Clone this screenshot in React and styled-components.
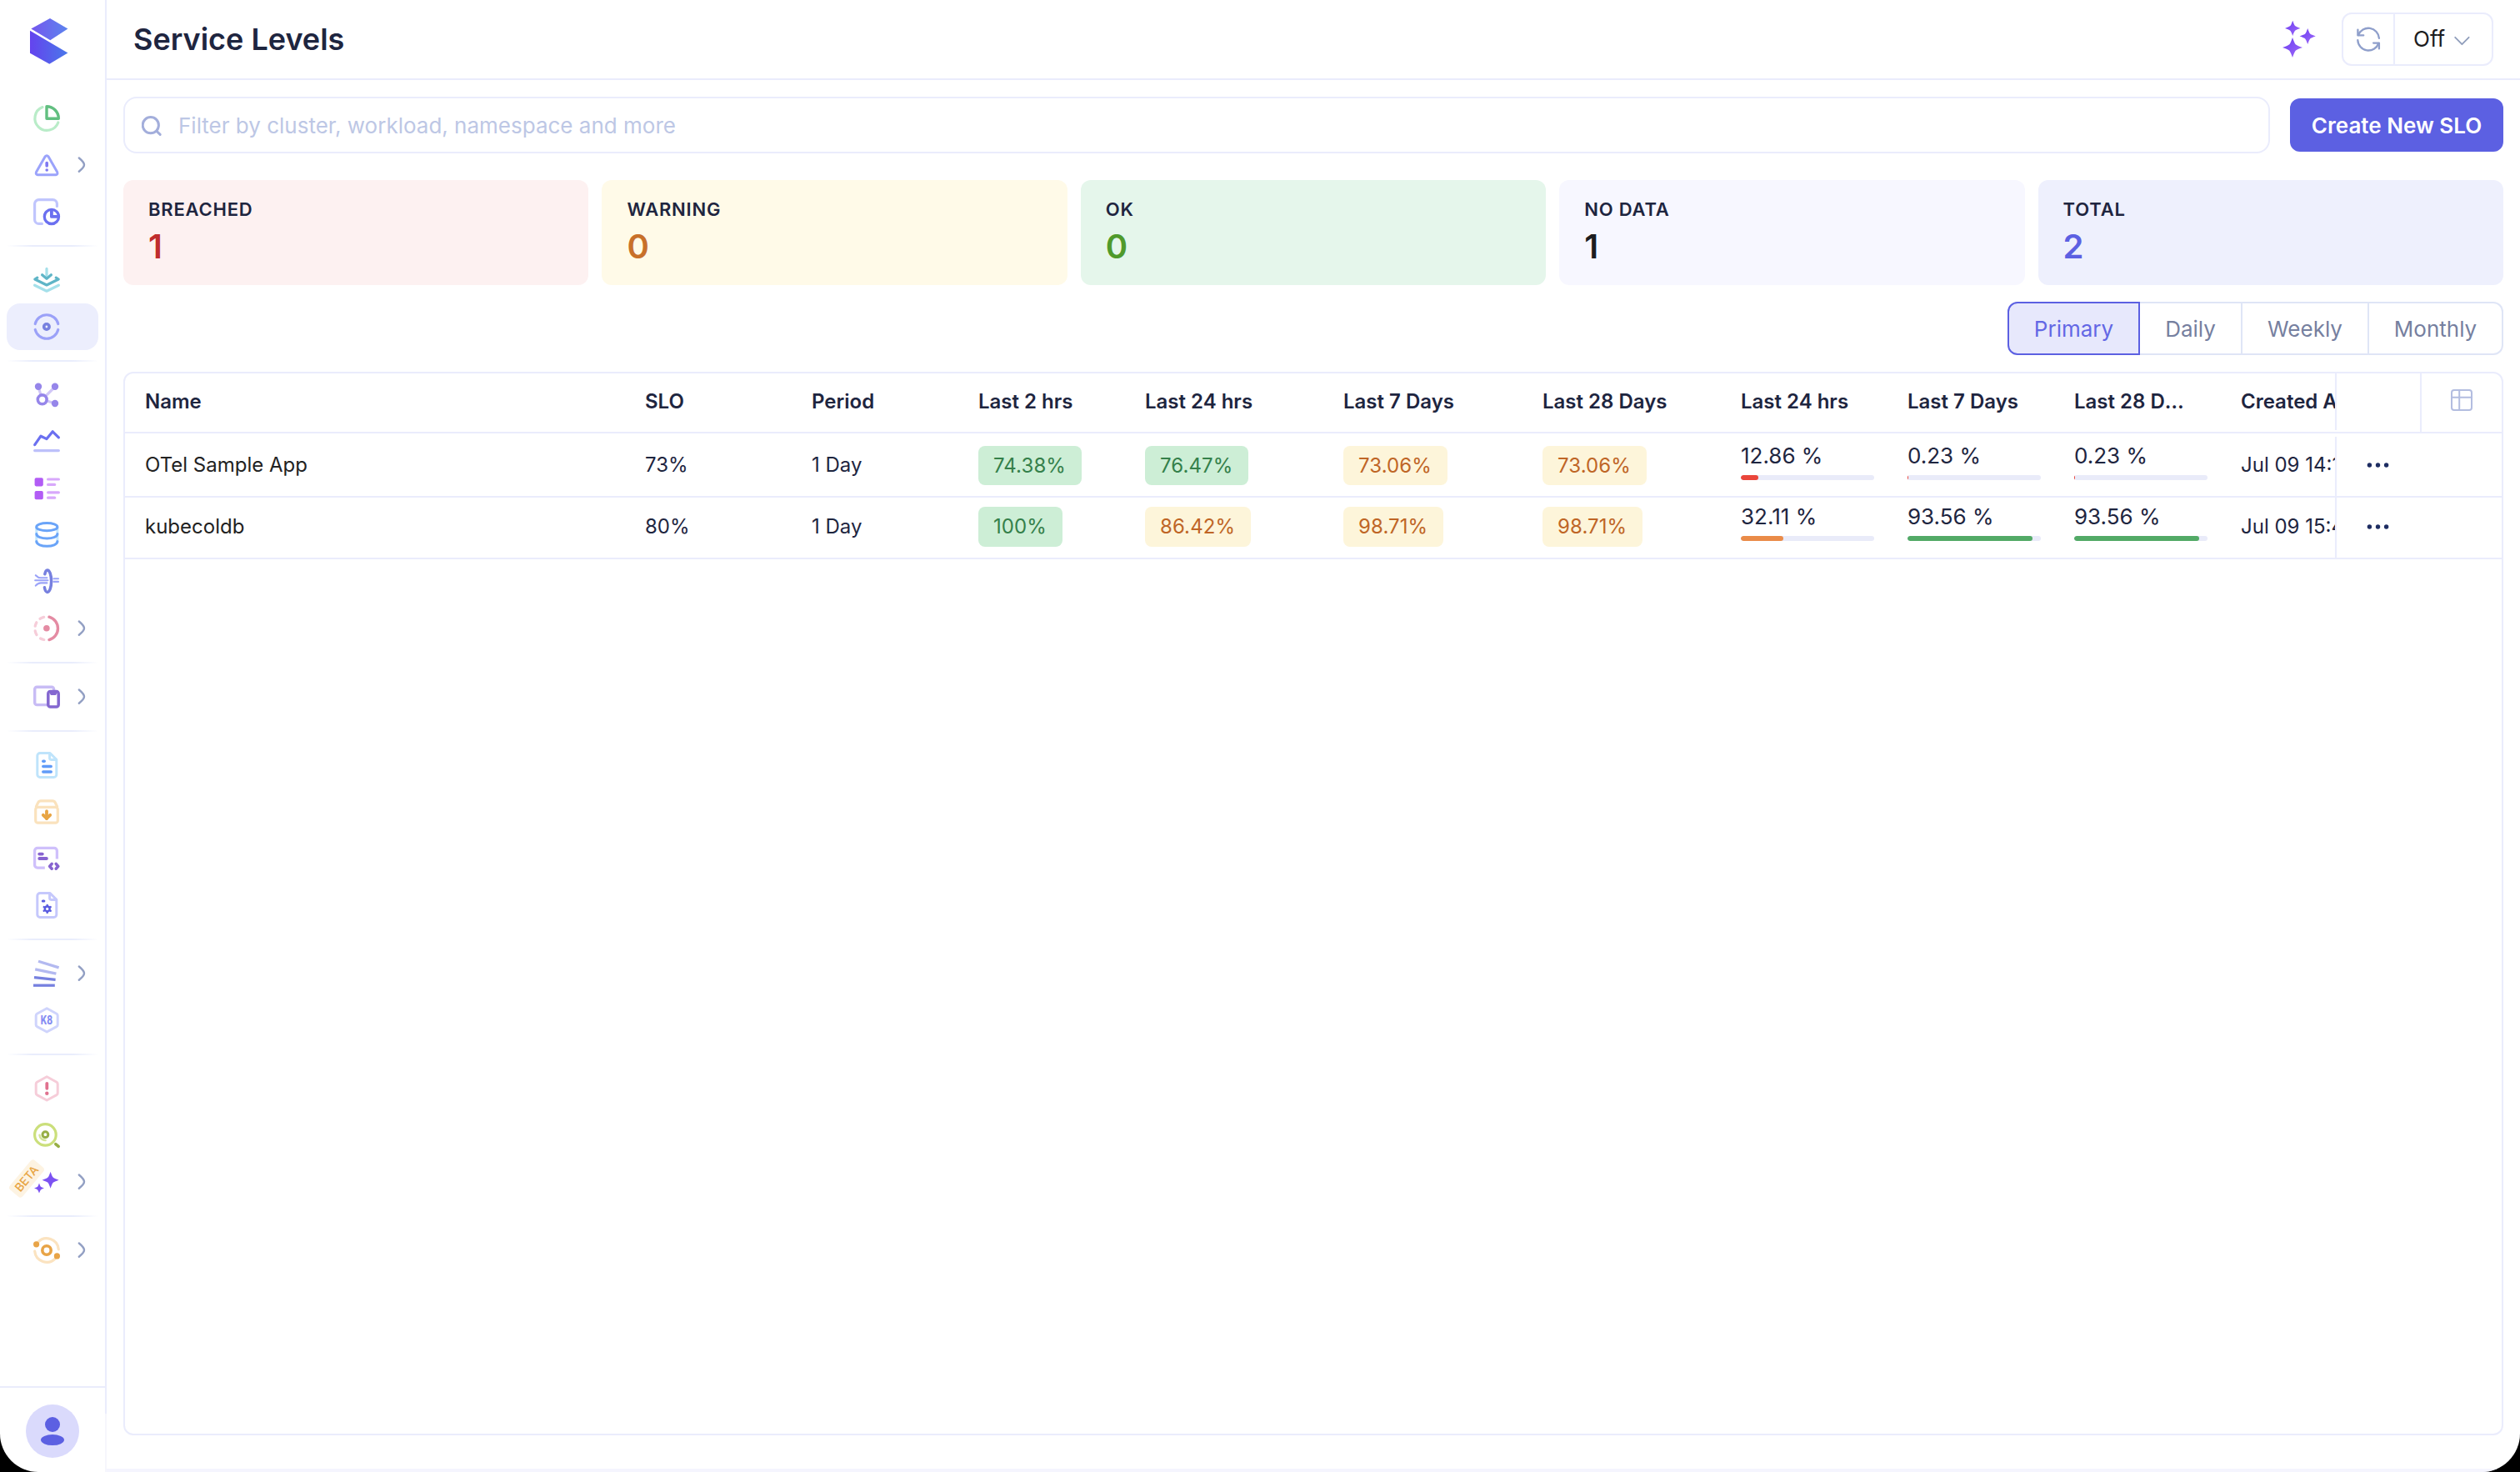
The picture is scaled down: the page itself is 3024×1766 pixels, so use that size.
import React from 'react';
import styled, { createGlobalStyle, css } from 'styled-components';

const Global = createGlobalStyle`
  *, *::before, *::after { box-sizing: border-box; }
  html, body, #root { height: 100%; }
  body {
    margin: 0;
    background: #000;
    overflow: hidden;
    font-family: Inter, "Liberation Sans", sans-serif;
    color: #1e253f;
  }
`;

const line = '#eaecfc';

/* ---------- shell ---------- */
const Window = styled.div`
  display: flex;
  width: 100%;
  height: 1766px;
  background: #fff;
  border-radius: 0 0 46px 46px;
  overflow: hidden;
`;
const Sidebar = styled.aside`
  display: flex;
  flex-direction: column;
  width: 128px;
  flex: none;
`;
const SidebarTop = styled.div`
  flex: 1;
  display: flex;
  flex-direction: column;
  border-right: 2px solid ${line};
`;
const LogoBox = styled.div`
  height: 114px;
  padding: 22px 0 0 36px;
  svg { display: block; }
`;
const NavItem = styled.a`
  position: relative;
  display: flex;
  align-items: center;
  height: 56px;
  margin: 0 8px;
  padding-left: 32px;
  border-radius: 16px;
  background: ${(p) => (p.$active ? '#eceefd' : 'transparent')};
  svg { display: block; flex: none; overflow: visible; }
`;
const ChevronSlot = styled.span`
  margin-left: 20px;
`;
const NavDivider = styled.hr`
  width: 110px;
  height: 2px;
  margin: 12px 8px;
  border: 0;
  background: linear-gradient(90deg, rgba(234, 238, 252, 0), #e9edfc 28%, #e9edfc 72%, rgba(234, 238, 252, 0));
`;
const BetaTag = styled.span`
  position: absolute;
  left: 1px;
  top: 14px;
  width: 46px;
  height: 20px;
  border-radius: 4px;
  background: #fdf3e2;
  color: #e8a544;
  font-size: 14px;
  font-weight: 500;
  line-height: 20px;
  text-align: center;
  transform: rotate(-50deg);
`;
const Profile = styled.div`
  height: 103px;
  border-top: 2px solid ${line};
  border-right: 2px solid;
  border-image: linear-gradient(${line}, ${line} 31%, #f6f6fc 32%, #f6f6fc) 2;
  border-bottom: 0;
  border-left: 0;
  padding: 20px 0 0 31px;
`;
const Avatar = styled.div`
  width: 64px;
  height: 64px;
  border-radius: 50%;
  background: #dadafc;
  svg { display: block; }
`;

/* ---------- main ---------- */
const Main = styled.main`
  flex: 1;
  min-width: 0;
  display: flex;
  flex-direction: column;
  border-bottom: 4px solid #f5f5fe;
`;
const Header = styled.header`
  display: flex;
  align-items: center;
  height: 96px;
  padding: 0 32px;
  border-bottom: 2px solid ${line};
`;
const Title = styled.h1`
  margin: 0;
  font-size: 36px;
  font-weight: 600;
  line-height: 44px;
`;
const HeaderTools = styled.div`
  display: flex;
  align-items: center;
  gap: 31px;
  margin-left: auto;
  svg { display: block; }
`;
const RefreshGroup = styled.div`
  display: flex;
  width: 182px;
  height: 64px;
  border: 2px solid ${line};
  border-radius: 12px;
`;
const RefreshButton = styled.button`
  display: flex;
  align-items: center;
  justify-content: center;
  width: 62px;
  padding: 0;
  border: 0;
  border-right: 2px solid ${line};
  background: none;
`;
const IntervalButton = styled.button`
  flex: 1;
  display: flex;
  align-items: center;
  gap: 11px;
  padding: 0 0 0 22px;
  border: 0;
  background: none;
  font: 400 26px/32px Inter, sans-serif;
  color: #1d1d1f;
  svg { margin-top: 3px; }
`;
const Content = styled.div`
  flex: 1;
  display: flex;
  flex-direction: column;
  padding: 20px 20px 40px;
`;
const FilterBar = styled.div`
  display: flex;
  align-items: center;
  gap: 24px;
`;
const SearchBox = styled.label`
  flex: 1;
  display: flex;
  align-items: center;
  gap: 18px;
  height: 68px;
  padding: 1px 0 0 20px;
  border: 2px solid ${line};
  border-radius: 16px;
  color: #bdc7e5;
  font-size: 26px;
  line-height: 32px;
`;
const PrimaryButton = styled.button`
  width: 256px;
  height: 64px;
  padding: 1px 0 0;
  border: 0;
  border-radius: 12px;
  background: #5c60e2;
  color: #fff;
  font: 600 26px/32px Inter, sans-serif;
  white-space: nowrap;
`;
const Stats = styled.section`
  display: grid;
  grid-template-columns: repeat(5, 1fr);
  gap: 16px;
  margin-top: 32px;
`;
const StatCard = styled.div`
  height: 126px;
  padding: 22px 30px 0;
  border-radius: 12px;
  background: ${(p) => p.$bg};
`;
const StatLabel = styled.div`
  font-size: 22px;
  font-weight: 600;
  line-height: 26px;
  letter-spacing: 0.8px;
`;
const StatValue = styled.div`
  margin-top: 8px;
  font-size: 40px;
  font-weight: 600;
  line-height: 48px;
  color: ${(p) => p.$color};
`;
const Tabs = styled.div`
  display: flex;
  align-self: flex-end;
  margin-top: 20px;
`;
const Tab = styled.button`
  width: ${(p) => p.$w}px;
  height: 64px;
  padding: 1px 0 0;
  border: 2px solid #dfe5f6;
  border-left-width: 0;
  background: #fff;
  color: #76809f;
  font: 400 26px/32px Inter, sans-serif;
  &:first-child { border-radius: 12px 0 0 12px; border-left-width: 2px; }
  &:last-child { border-radius: 0 12px 12px 0; }
  ${(p) => p.$active && css`
    border-color: #5c60e2;
    background: #e7e8fc;
    color: #6367e5;
  `}
`;

/* ---------- table ---------- */
const Table = styled.section`
  flex: 1;
  margin-top: 20px;
  border: 2px solid ${line};
  border-radius: 12px;
`;
const Row = styled.div`
  display: flex;
  height: ${(p) => p.$h}px;
  border-bottom: 2px solid ${line};
`;
const Scroller = styled.div`
  display: grid;
  grid-template-columns: 600px 200px 200px 200px 238px 239px 238px 200px 200px 200px 240px;
  align-items: center;
  width: 2652px;
  overflow: hidden;
  padding-bottom: ${(p) => p.$pb || 0}px;
`;
const Cell = styled.div`
  padding: 0 ${(p) => (p.$head ? 36 : 16)}px 0 24px;
  font-size: 24px;
  font-weight: ${(p) => (p.$head ? 600 : 400)};
  line-height: 30px;
  white-space: nowrap;
  overflow: hidden;
  text-overflow: ellipsis;
  color: ${(p) => (p.$dark ? '#222' : '#1e253f')};
`;
const Badge = styled.span`
  display: block;
  width: fit-content;
  height: ${(p) => (p.$tall ? 48 : 47)}px;
  margin-top: ${(p) => (p.$tall ? 1 : 2)}px;
  padding: 0 19px 0 18px;
  border-radius: 8px;
  line-height: 47px;
  letter-spacing: 0.1px;
  background: ${(p) => (p.$tone === 'ok' ? '#cdeed6' : '#fdf5da')};
  color: ${(p) => (p.$tone === 'ok' ? '#34804a' : '#bf6526')};
`;
const BudgetCell = styled(Cell)`
  padding-bottom: ${(p) => (p.$tall ? 10 : 8)}px;
`;
const Budget = styled.div`
  font-size: 26px;
  line-height: 32px;
`;
const Track = styled.div`
  width: 160px;
  height: 6px;
  margin-top: 7px;
  border-radius: 3px;
  background: #e9ebf9;
  overflow: hidden;
`;
const Fill = styled.div`
  height: 100%;
  min-width: 1px;
  border-radius: 3px;
  background: ${(p) => p.$color};
`;
const Pinned = styled.div`
  flex: 1;
  display: flex;
  align-items: center;
  border-left: 2px solid ${line};
  margin-top: ${(p) => p.$mt || 0}px;
  margin-bottom: ${(p) => p.$mb || 0}px;
  padding-left: ${(p) => (p.$dots ? 36 : 0)}px;
  padding-bottom: ${(p) => p.$pb || 0}px;
  svg { display: block; }
`;
const ColumnPicker = styled.div`
  display: flex;
  align-items: center;
  justify-content: center;
  width: 98px;
  border-left: 2px solid ${line};
  padding-bottom: 6px;
`;

/* ---------- icons ---------- */
const S = ({ children, c, w = 3, ...rest }) => (
  <g fill="none" stroke={c} strokeWidth={w} strokeLinecap="round" strokeLinejoin="round" {...rest}>{children}</g>
);
const Icon = ({ children }) => <svg width="32" height="32" viewBox="0 0 32 32">{children}</svg>;

const star = (x, y, r) => {
  const k = r * 0.31;
  const a = k * 0.6;
  const b = k * 1.45;
  return `M${x} ${y - r}Q${x + a} ${y - b} ${x + k} ${y - k}Q${x + b} ${y - a} ${x + r} ${y}Q${x + b} ${y + a} ${x + k} ${y + k}Q${x + a} ${y + b} ${x} ${y + r}Q${x - a} ${y + b} ${x - k} ${y + k}Q${x - b} ${y + a} ${x - r} ${y}Q${x - b} ${y - a} ${x - k} ${y - k}Q${x - a} ${y - b} ${x} ${y - r}Z`;
};

const Logo = () => (
  <svg width="46" height="56" viewBox="0 0 46 56">
    <defs>
      <linearGradient id="lg1" x1="0" x2="1"><stop stopColor="#7557ee" /><stop offset="1" stopColor="#5c83ee" /></linearGradient>
      <linearGradient id="lg2" x1="0" x2="1"><stop stopColor="#6443ee" /><stop offset="1" stopColor="#4a78ea" /></linearGradient>
    </defs>
    <path d="M24 0L45.4 12.4L24.3 26.3L1.3 12.4Z" fill="url(#lg1)" />
    <path d="M0 14.7L45.4 41.4L23.3 54.8L0 41.7Z" fill="url(#lg2)" />
  </svg>
);
const Page = ({ c }) => (
  <S c={c}>
    <path d="M8 1.5H20L27.8 9.3V27.3A3.2 3.2 0 0 1 24.6 30.5H8A3.2 3.2 0 0 1 4.8 27.3V4.7A3.2 3.2 0 0 1 8 1.5Z" />
    <path d="M19.6 2V7.6A1.8 1.8 0 0 0 21.4 9.4H27.4" />
  </S>
);
const Hex = ({ c }) => (
  <S c={c}><path d="M16.2 1.8L28 8.2Q29.2 9 29.2 10.4V21.4Q29.2 22.8 28 23.6L16.2 30L4.4 23.6Q3.2 22.8 3.2 21.4V10.4Q3.2 9 4.4 8.2Z" /></S>
);

const icons = {
  overview: <Icon>
    <S c="#b9ecc8" w="3.2"><path d="M11 2.6A14.4 14.4 0 1 0 29.8 21" /></S>
    <S c="#62bf80" w="3.4"><path d="M16 1.8V16.2H30.3A14.3 14.3 0 0 0 16 1.8Z" /></S>
  </Icon>,
  alerts: <Icon>
    <S c="#9ba3fb" w="3"><path d="M14.2 5.8Q16.1 3.6 18 5.8L28.6 24.2Q29.8 27.2 27 27.8H5.2Q2.4 27.2 3.6 24.2Z" /></S>
    <S c="#7f79f3" w="3.6"><path d="M16.2 13.6V17" /><path d="M16.2 22V22.01" /></S>
  </Icon>,
  dashboards: <Icon>
    <S c="#c0c5fd" w="3.2"><path d="M28.4 9.4V6.6A5 5 0 0 0 23.4 1.6H6.6A5 5 0 0 0 1.6 6.6V25.4A5 5 0 0 0 6.6 30.4H10.4" /></S>
    <S c="#6b70f0" w="3.3"><circle cx="21.9" cy="21.9" r="8.6" /><path d="M21.9 14V21.9H30" strokeWidth="3.8" /></S>
  </Icon>,
  ingest: <Icon>
    <S c="#a5e0ea" w="3.2"><path d="M16 2.4V12" /><path d="M1.6 22.2L16 29.2L30.4 22.2" /></S>
    <S c="#5fb5c7" w="3.2"><path d="M10.6 9.8L16 14.4L21.4 9.8" /><path d="M4.8 13.2L1.8 15L16 22L30.2 15L27.2 13.2" /></S>
  </Icon>,
  slo: <Icon>
    <S c="#9ba1f8" w="3.1"><path d="M2.2 12.6A14.2 14.2 0 0 1 29.8 12.6" /><path d="M2.2 19.4A14.2 14.2 0 0 0 29.8 19.4" /></S>
    <circle cx="15.9" cy="16" r="3.2" fill="none" stroke="#7780df" strokeWidth="3.6" />
  </Icon>,
  map: <Icon>
    <S c="#d1c7f7" w="3.2"><path d="M6 6L10.6 21.3L26 6" /><path d="M10.6 21.3L26 26" /></S>
    <g fill="#9686ea"><circle cx="6" cy="5.8" r="4.2" /><circle cx="26" cy="5.8" r="4.2" /><circle cx="26" cy="26" r="4.2" /></g>
    <circle cx="10.7" cy="21.3" r="5.4" fill="#fff" stroke="#9686ea" strokeWidth="3.6" />
  </Icon>,
  metrics: <Icon>
    <S c="#6b70f0" w="3.2"><path d="M1.7 19.6L9 9.2L16 12.6L23.2 3.8L30.4 10.8" /></S>
    <S c="#bdc0fa" w="3.4"><path d="M1.7 26.6H30.3" /></S>
  </Icon>,
  list: <Icon>
    <g fill="#b25cf5"><rect x="1.6" y="3.2" width="10.2" height="10.2" rx="1.8" /><rect x="1.6" y="19" width="10.2" height="10.2" rx="1.8" /></g>
    <S c="#d8a8fb" w="3.2"><path d="M17.6 5H30.4" /><path d="M17.6 11.4H25.6" /><path d="M17.6 20.8H30.4" /><path d="M17.6 27.2H25.6" /></S>
  </Icon>,
  db: <Icon>
    <S c="#c2e6fd" w="3"><path d="M3.8 7V24" /><path d="M28.9 7V24" /></S>
    <S c="#6aa4f8" w="3"><ellipse cx="16.3" cy="6.2" rx="12.6" ry="4.6" /><path d="M3.8 14.6C3.8 21.8 28.9 21.8 28.9 14.6" /><path d="M3.8 23.6C3.8 31.2 28.9 31.2 28.9 23.6" /></S>
  </Icon>,
  pipe: <Icon>
    <S c="#9ba3f8" w="2.1"><path d="M2.8 8.2Q5.6 11.2 9 11.2H16.4" /><path d="M2.2 14.2H17.4" /><path d="M2.8 20.6Q5.6 17.4 9 17.4H16.4" /><path d="M24.4 12.2H30" /><path d="M24.4 15.9H30" /></S>
    <S c="#7780df" w="3.5"><path d="M13.8 6.8Q14.8 1.9 16.8 1.9C19.6 1.9 21.6 8 21.6 15.2C21.6 22.4 19.6 28.4 16.8 28.4Q14.4 28.4 13.4 22.8" /></S>
  </Icon>,
  apm: <Icon>
    <S c="#e48ba3" w="3.4"><path d="M19 2.2A14.2 14.2 0 0 1 19 29.6" /></S>
    <circle cx="15.9" cy="15.8" r="3.8" fill="#e48ba3" />
    <S c="#f6cdd9" w="3.3"><path d="M8 4.4Q10 3 12.6 2.4" /><path d="M3.8 8.8Q2.5 11 2.2 13.2" /><path d="M2.2 19Q2.6 21.4 4 23.6" /><path d="M8.6 28Q10.6 29.1 12.8 29.5" /></S>
  </Icon>,
  devices: <Icon>
    <S c="#c8bcf5" w="3.4"><path d="M24.6 8V6.8A2.6 2.6 0 0 0 22 4.2H4.3A2.6 2.6 0 0 0 1.7 6.8V23A2.6 2.6 0 0 0 4.3 25.6H16" /></S>
    <rect x="17.8" y="9.6" width="12.4" height="18.4" rx="2.6" fill="#fff" stroke="#8467d0" strokeWidth="3.5" />
    <path d="M20 9H28V11.4Q28 14 25.6 14H22.6Q20 14 20 11.4Z" fill="#8467d0" />
  </Icon>,
  logs: <Icon><Page c="#bfe4fb" /><S c="#609bf8" w="3.5"><path d="M11.8 11.2H13.2" /><path d="M11.8 17.6H21.2" /><path d="M11.8 24H21.2" /></S></Icon>,
  archive: <Icon>
    <S c="#fae2bd" w="3.2"><path d="M3.4 9.6L5.8 4.8Q6.8 2.8 9 2.8H23Q25.2 2.8 26.2 4.8L28.6 9.6" /><rect x="2.7" y="10.4" width="26.6" height="18.8" rx="2.8" /></S>
    <S c="#e8a544" w="3.8"><path d="M16 15.2V24" /><path d="M11.8 19.8L16 24L20.2 19.8" /></S>
  </Icon>,
  code: <Icon>
    <S c="#cfc0fb" w="3.3" strokeLinecap="butt"><path d="M28.4 16.6V6.8A3.4 3.4 0 0 0 25 3.4H5A3.4 3.4 0 0 0 1.6 6.8V23.8A3.4 3.4 0 0 0 5 27.2H13.8" /></S>
    <S c="#8763d0" w="3.8"><path d="M7.2 10.6H10.8" /><path d="M7.2 16H15.9" /></S>
    <S c="#8763d0" w="3.6"><path d="M22.2 22.4L19.6 25.4L22.2 28.2" /><path d="M27.2 22.4L29.8 25.4L27.2 28.2" /></S>
  </Icon>,
  config: <Icon><Page c="#c5c8fc" /><S c="#5a5ce0" w="3.2"><path d="M11.4 11H12.8" /></S>
    <S c="#5a5ce0" w="2.4"><circle cx="16.7" cy="20.4" r="2.9" /><path d="M16.7 15.9V16.4M16.7 24.9V24.4M12.7 18.1L13.1 18.4M20.7 18.1L20.3 18.4M12.7 22.7L13.1 22.4M20.7 22.7L20.3 22.4" /></S></Icon>,
  stack: <Icon>
    <S c="#b3b9f0" w="3.3" strokeLinecap="butt"><path d="M6 1.2L30.6 8.9" /><path d="M2.2 10.8L27.4 16.2" /></S>
    <S c="#7680df" w="3.3" strokeLinecap="butt"><path d="M1 20.6L26.6 23.3" /><path d="M0 30.2H25.8" /></S>
  </Icon>,
  k8: <Icon><Hex c="#cfd4fc" /><text x="16" y="21" textAnchor="middle" fontFamily="Inter, sans-serif" fontSize="14.2" fontWeight="800" textLength="14.4" lengthAdjust="spacingAndGlyphs" fill="#858cf2">K8</text></Icon>,
  incident: <Icon><Hex c="#f6cdd9" /><S c="#e0728f" w="3.8"><path d="M16.3 9.8V15.8" /><path d="M16.3 21.8V21.81" strokeWidth="4.4" /></S></Icon>,
  inspect: <Icon>
    <S c="#cbdf7b" w="3.2"><circle cx="14.4" cy="15.4" r="12.8" /></S>
    <S c="#d3e495" w="2.4"><path d="M7.4 15.6A7 7 0 0 0 14.6 22" /></S>
    <circle cx="14.4" cy="15.2" r="3.4" fill="none" stroke="#97ae45" strokeWidth="3" />
    <S c="#97ae45" w="3.6"><path d="M26.8 26.6L30.2 29.4" /></S>
  </Icon>,
  ai: <Icon><g fill="#7c52f2"><path d={star(20.6, 13.7, 10)} /><path d={star(7, 23.6, 6)} /></g></Icon>,
  settings: <Icon>
    <S c="#fbe3c0" w="3.2"><path d="M5.4 6.4A14.4 14.4 0 0 1 30.3 14.8" /><path d="M1.7 17.2A14.4 14.4 0 0 0 26.6 25.6" /></S>
    <g fill="#e8a447"><circle cx="3.6" cy="8.8" r="3.6" /><circle cx="28.4" cy="22.9" r="3.6" /></g>
    <circle cx="16" cy="16" r="5.2" fill="none" stroke="#e8a447" strokeWidth="3.6" />
  </Icon>,
};

const NavChevron = () => (
  <ChevronSlot>
    <svg width="12" height="20" viewBox="0 0 12 20"><S c="#929fc3" w="2.4"><path d="M2.8 1.5Q9 6.6 9 9.8Q9 12.8 2.8 17.7" /></S></svg>
  </ChevronSlot>
);

const groups = [
  [['overview'], ['alerts', 1], ['dashboards']],
  [['ingest'], ['slo']],
  [['map'], ['metrics'], ['list'], ['db'], ['pipe'], ['apm', 1]],
  [['devices', 1]],
  [['logs'], ['archive'], ['code'], ['config']],
  [['stack', 1], ['k8']],
  [['incident'], ['inspect'], ['ai', 1]],
  [['settings', 1]],
];

const stats = [
  ['BREACHED', '1', '#fdf1f1', '#bf2d2d'],
  ['WARNING', '0', '#fffae8', '#c8702a'],
  ['OK', '0', '#e5f6eb', '#4f9a2b'],
  ['NO DATA', '1', '#f7f7ff', '#1d1d1f'],
  ['TOTAL', '2', '#eef0fd', '#5c60e2'],
];

const columns = ['Name', 'SLO', 'Period', 'Last 2 hrs', 'Last 24 hrs', 'Last 7 Days', 'Last 28 Days', 'Last 24 hrs', 'Last 7 Days', 'Last 28 Days', 'Created At'];

const rows = [
  { name: 'OTel Sample App', slo: '73%', period: '1 Day', h: 77, created: 'Jul 09 14:13',
    badges: [['74.38%', 'ok'], ['76.47%', 'ok'], ['73.06%'], ['73.06%']],
    budgets: [[12.86, '#ea463b'], [0.23, '#ea463b'], [0.23, '#ea463b']] },
  { name: 'kubecoldb', slo: '80%', period: '1 Day', h: 74, tall: true, created: 'Jul 09 15:42',
    badges: [['100%', 'ok'], ['86.42%'], ['98.71%'], ['98.71%']],
    budgets: [[32.11, '#ea8b48'], [93.56, '#52aa66'], [93.56, '#52aa66']] },
];

export default function App() {
  return (
    <>
      <Global />
      <Window>
        <Sidebar>
          <SidebarTop>
            <LogoBox><Logo /></LogoBox>
            {groups.map((group, i) => (
              <React.Fragment key={i}>
                {i > 0 && <NavDivider />}
                {group.map(([name, more]) => (
                  <NavItem key={name} $active={name === 'slo'}>
                    {icons[name]}
                    {name === 'ai' && <BetaTag>BETA</BetaTag>}
                    {more && <NavChevron />}
                  </NavItem>
                ))}
              </React.Fragment>
            ))}
          </SidebarTop>
          <Profile>
            <Avatar>
              <svg width="64" height="64" viewBox="0 0 64 64" fill="#5c60e2">
                <circle cx="32" cy="24" r="9" /><ellipse cx="32" cy="42.6" rx="14" ry="6.5" />
              </svg>
            </Avatar>
          </Profile>
        </Sidebar>
        <Main>
          <Header>
            <Title>Service Levels</Title>
            <HeaderTools>
              <svg width="40" height="44" viewBox="0 0 40 44">
                <defs><linearGradient id="sp" x1="0" y1="0" x2="1" y2="1"><stop stopColor="#6a3cf0" /><stop offset="1" stopColor="#a06bfa" /></linearGradient></defs>
                <g><path d={star(12.2, 8.9, 9.2)} fill="url(#sp)" /><path d={star(30.2, 18.5, 9.6)} fill="url(#sp)" /><path d={star(12, 32, 12)} fill="url(#sp)" /></g>
              </svg>
              <RefreshGroup>
                <RefreshButton>
                  <svg width="32" height="32" viewBox="0 0 32 32">
                    <S c="#8f9fcb" w="2.3"><path d="M3.4 4.6V11.4H10.2" /><path d="M4 11A12.9 12.9 0 0 1 28.9 14.8" /><path d="M28.9 27.4V20.6H22.1" /><path d="M28.3 21A12.9 12.9 0 0 1 3.3 17.2" /></S>
                  </svg>
                </RefreshButton>
                <IntervalButton>
                  Off
                  <svg width="20" height="12" viewBox="0 0 20 12"><S c="#8f9dbb" w="1.8"><path d="M1.2 1.8L9.4 10.2L17.6 1.8" /></S></svg>
                </IntervalButton>
              </RefreshGroup>
            </HeaderTools>
          </Header>
          <Content>
            <FilterBar>
              <SearchBox>
                <svg width="26" height="26" viewBox="0 0 26 26"><S c="#a3aedb" w="3"><circle cx="10.8" cy="12.2" r="9.6" /><path d="M18 19.4L22.2 23.4" /></S></svg>
                Filter by cluster, workload, namespace and more
              </SearchBox>
              <PrimaryButton>Create New SLO</PrimaryButton>
            </FilterBar>
            <Stats>
              {stats.map(([label, value, bg, color]) => (
                <StatCard key={label} $bg={bg}>
                  <StatLabel>{label}</StatLabel>
                  <StatValue $color={color}>{value}</StatValue>
                </StatCard>
              ))}
            </Stats>
            <Tabs>
              <Tab $w={159} $active>Primary</Tab>
              <Tab $w={123}>Daily</Tab>
              <Tab $w={152}>Weekly</Tab>
              <Tab $w={161}>Monthly</Tab>
            </Tabs>
            <Table>
              <Row $h={72}>
                <Scroller $pb={3}>
                  {columns.map((c, i) => <Cell $head key={i}>{c}</Cell>)}
                </Scroller>
                <Pinned $mb={2} />
                <ColumnPicker>
                  <svg width="28" height="28" viewBox="0 0 28 28"><S c="#b3bde0" w="2"><rect x="2" y="2" width="24" height="24" rx="3" /><path d="M2 10.8H26" /><path d="M11.2 2V26" /></S></svg>
                </ColumnPicker>
              </Row>
              {rows.map((r) => (
                <Row key={r.name} $h={r.h}>
                  <Scroller $pb={r.tall ? 3 : 0}>
                    <Cell $dark>{r.name}</Cell>
                    <Cell>{r.slo}</Cell>
                    <Cell>{r.period}</Cell>
                    {r.badges.map(([v, tone], k) => <Cell key={k}><Badge $tone={tone} $tall={r.tall}>{v}</Badge></Cell>)}
                    {r.budgets.map(([v, color], k) => (
                      <BudgetCell key={k} $tall={r.tall}>
                        <Budget>{v} %</Budget>
                        <Track><Fill $color={color} style={{ width: `${v}%` }} /></Track>
                      </BudgetCell>
                    ))}
                    <Cell>{r.created}</Cell>
                  </Scroller>
                  <Pinned $dots $mt={r.tall ? 0 : 4} $pb={3}>
                    <svg width="28" height="6" viewBox="0 0 28 6" fill="#1e2d62"><circle cx="3.4" cy="3" r="2.7" /><circle cx="13.5" cy="3" r="2.7" /><circle cx="23.6" cy="3" r="2.7" /></svg>
                  </Pinned>
                </Row>
              ))}
            </Table>
          </Content>
        </Main>
      </Window>
    </>
  );
}
